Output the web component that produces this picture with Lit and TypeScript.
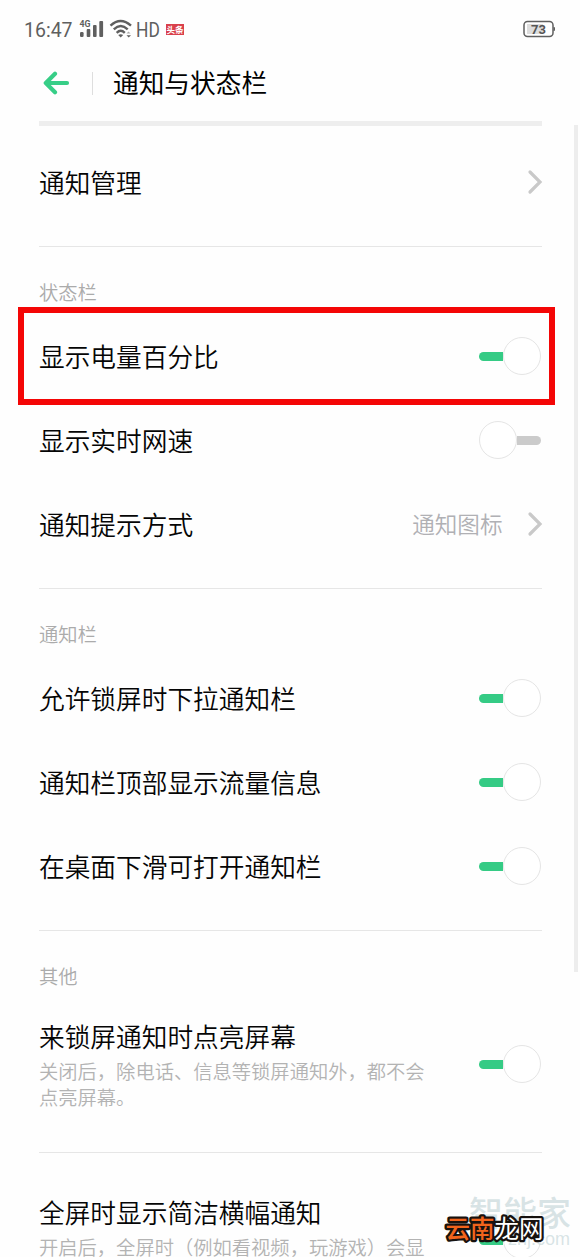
import { LitElement, html, css } from "lit";
import { customElement, property } from "lit/decorators.js";
import { classMap } from "lit/directives/class-map.js";

@customElement("toggle-switch")
class ToggleSwitch extends LitElement {
  @property({ type: Boolean }) on = false;
  static styles = css`
    :host { display: block; flex: none; width: 63px; height: 40px; }
    .switch { display: flex; align-items: center; height: 40px; }
    .track { width: 24px; height: 9px; background: #cbcbcb; border-radius: 0 5px 5px 0; order: 2; }
    .knob { box-sizing: border-box; width: 38.5px; height: 38.5px; border: 1px solid #e5e5e5; border-radius: 50%; background: #fff; order: 1; }
    .on .track { background: #35cb85; order: 0; border-radius: 5px 0 0 5px; }
  `;
  render() {
    return html`<div class=${classMap({ switch: true, on: this.on })}>
      <div class="track"></div><div class="knob"></div>
    </div>`;
  }
}

@customElement("setting-row")
class SettingRow extends LitElement {
  @property() label = "";
  @property() kind = "on";
  @property() value = "";
  @property({ attribute: false }) note: string[] = [];
  static styles = css`
    :host { display: block; }
    .row { display: flex; align-items: center; justify-content: space-between; height: 84px; }
    .tall { height: 132px; }
    .tall .copy { align-self: flex-start; padding-top: 20px; }
    .label { font-size: 25.7px; line-height: 36px; color: #050505; font-weight: 350; }
    .note { font-size: 19.3px; line-height: 26px; color: #b3b3b3; font-weight: 350; white-space: nowrap; }
    .notes { padding-top: 4px; }
    .end { display: flex; align-items: center; gap: 24px; margin-right: -1px; }
    .value { font-size: 22.6px; line-height: 32px; color: #b0b0b4; font-weight: 350; }
    .chevron { display: block; width: 16px; height: 26px; }
  `;
  render() {
    const tall = this.note.length > 0;
    return html`<div class=${classMap({ row: true, tall })}>
      <div class="copy">
        <div class="label">${this.label}</div>
        ${tall ? html`<div class="notes">${this.note.map((n) => html`<div class="note">${n}</div>`)}</div>` : ""}
      </div>
      ${this.kind === "link"
        ? html`<div class="end">
            <span class="value">${this.value}</span>
            <svg class="chevron" viewBox="0 0 16 26"><path d="M3 3 L13 13 L3 23" fill="none" stroke="#c9c9c9" stroke-width="3.2" stroke-linecap="round" stroke-linejoin="miter"/></svg>
          </div>`
        : html`<toggle-switch ?on=${this.kind === "on"}></toggle-switch>`}
    </div>`;
  }
}

interface Row { label: string; kind: string; value?: string; note?: string[]; }
interface Section { title?: string; rows: Row[]; }

const SECTIONS: Section[] = [
  { rows: [{ label: "通知管理", kind: "link" }] },
  {
    title: "状态栏",
    rows: [
      { label: "显示电量百分比", kind: "on" },
      { label: "显示实时网速", kind: "off" },
      { label: "通知提示方式", kind: "link", value: "通知图标" },
    ],
  },
  {
    title: "通知栏",
    rows: [
      { label: "允许锁屏时下拉通知栏", kind: "on" },
      { label: "通知栏顶部显示流量信息", kind: "on" },
      { label: "在桌面下滑可打开通知栏", kind: "on" },
    ],
  },
  {
    title: "其他",
    rows: [{ label: "来锁屏通知时点亮屏幕", kind: "on", note: ["关闭后，除电话、信息等锁屏通知外，都不会", "点亮屏幕。"] }],
  },
  { rows: [{ label: "全屏时显示简洁横幅通知", kind: "on", note: ["开启后，全屏时（例如看视频，玩游戏）会显"] }] },
];

@customElement("app-root")
class AppRoot extends LitElement {
  static styles = css`
    :host {
      display: block; position: relative; width: 580px; height: 1257px; overflow: hidden;
      background: #fefefe; font-family: "Noto Sans CJK SC", sans-serif;
    }
    .status { display: flex; align-items: center; height: 58px; padding: 0 24px 0 24px; box-sizing: border-box; color: #5f5f5f; font-family: Roboto, sans-serif; }
    .time { font-size: 19.5px; line-height: 24px; width: 55px; padding-top: 3px; }
    .signal { display: block; width: 25px; height: 20px; }
    .wifi { display: block; width: 24px; height: 20px; margin-left: 5px; }
    .hd { font-size: 20px; line-height: 24px; margin-left: 3px; padding-top: 2px; transform: scaleX(.87); transform-origin: left; width: 24px; white-space: nowrap; }
    .news { margin-left: 6px; width: 18px; height: 11px; background: #d9404b; color: #fff; font: 700 8.5px/11px "Noto Sans CJK SC", sans-serif; text-align: center; }
    .battery { display: block; width: 33px; height: 18px; margin-left: auto; }
    .header { display: flex; align-items: center; height: 50px; padding-left: 43px; }
    .back { display: block; width: 27px; height: 24px; }
    .bar { width: 1px; height: 23px; background: #dedede; margin-left: 22px; }
    .title { margin-left: 20px; margin-top: -2px; font-size: 25.7px; line-height: 36px; font-weight: 400; color: #000; }
    .content { padding: 13px 39px 0 39px; width: 502.5px; }
    .top { height: 5px; background: #eee; margin-bottom: 14px; }
    .section { padding-bottom: 22px; }
    .section + .section { border-top: 1px solid #e6e6e6; padding-top: 21px; }
    .section + .section.titled { padding-top: 0; }
    .caption { height: 67px; box-sizing: border-box; padding-top: 31px; font-size: 19.3px; line-height: 28px; font-weight: 350; color: #ababab; }
    .scroll { position: absolute; left: 574px; top: 125px; width: 3.5px; height: 847px; background: #ededed; }
    .highlight { position: absolute; left: 18px; top: 307px; width: 537px; height: 98px; box-sizing: border-box; border: 6.5px solid #f40606; }
    .mark { position: absolute; left: 469px; top: 1193px; color: rgba(190, 210, 213, .6); white-space: nowrap; }
    .markname { font-size: 34px; line-height: 38px; font-weight: 500; }
    .marksite { font: 18px/16px "Liberation Sans", sans-serif; text-align: right; padding-right: 1px; }
    .logo { position: absolute; left: 442px; top: 1210px; width: 110px; height: 40px; font-size: 24.5px; font-weight: 400; }
  `;
  render() {
    return html`
      <div class="status">
        <span class="time">16:47</span>
        <svg class="signal" viewBox="0 0 25 20" fill="#5f5f5f">
          <text x="0.5" y="7.5" font-family="Roboto, sans-serif" font-size="8.5" font-weight="700" textLength="11" lengthAdjust="spacingAndGlyphs">4G</text>
          <rect x="1" y="13" width="3.6" height="5" rx="1.2"/>
          <rect x="7.7" y="10" width="3.6" height="8" rx="1"/>
          <rect x="14" y="6" width="3.6" height="12" rx="1"/>
          <rect x="20.3" y="2" width="3.8" height="16" rx="1"/>
        </svg>
        <svg class="wifi" viewBox="0 0 24 20" fill="none" stroke="#5f5f5f" stroke-width="2.4">
          <path d="M1.5 6.6 Q11.5 -2.6 22 6.6"/>
          <path d="M4.8 10.3 Q11.7 3.8 18.7 10.3"/>
          <path d="M7.7 13.8 Q11.7 9.8 15.8 13.8"/>
          <path d="M9.2 16 Q11.7 14.4 14.2 16 L11.7 18.6 Z" fill="#5f5f5f" stroke="none"/>
          <path d="M17.5 14.5 L19.5 12.5 L21.5 14.5 Z" fill="#aaa" stroke="none"/>
          <path d="M17.5 16.3 H22 L19.7 18.5 Z" fill="#5f5f5f" stroke="none"/>
        </svg>
        <span class="hd">HD</span>
        <span class="news">头条</span>
        <svg class="battery" viewBox="0 0 33 18">
          <rect x="1" y="1.5" width="29" height="15" rx="3.5" fill="#fff" stroke="#5f5f5f" stroke-width="1.5"/>
          <rect x="4" y="4" width="16" height="10" fill="#ddd"/>
          <path d="M30.5 7 H31 Q32 7 32 8 V10 Q32 11 31 11 H30.5 Z" fill="#5f5f5f"/>
          <text x="15.4" y="13.5" text-anchor="middle" font-family="Roboto, sans-serif" font-size="13" font-weight="700" fill="#555">73</text>
        </svg>
      </div>
      <div class="header">
        <svg class="back" viewBox="0 0 27 24" fill="none" stroke="#37ce87" stroke-width="4.2" stroke-linecap="round" stroke-linejoin="round">
          <path d="M12 2.8 L2.8 12 L12 21.2 M3.5 12 H24"/>
        </svg>
        <div class="bar"></div>
        <div class="title">通知与状态栏</div>
      </div>
      <div class="content">
        <div class="top"></div>
        ${SECTIONS.map((s) => html`
          <div class=${classMap({ section: true, titled: !!s.title })}>
            ${s.title ? html`<div class="caption">${s.title}</div>` : ""}
            ${s.rows.map((r) => html`<setting-row .label=${r.label} .kind=${r.kind} .value=${r.value ?? ""} .note=${r.note ?? []}></setting-row>`)}
          </div>`)}
      </div>
      <div class="scroll"></div>
      <div class="highlight"></div>
      <div class="mark"><div class="markname">智能家</div><div class="marksite">znj.com</div></div>
      <svg class="logo" viewBox="0 0 110 40" stroke="#17120f" stroke-width="4.5" stroke-linejoin="round" paint-order="stroke">
        <text x="3.5" y="28" fill="#f2641c" font-weight="500">云南</text>
        <text x="52.5" y="28" fill="#fff">龙网</text>
      </svg>
    `;
  }
}
